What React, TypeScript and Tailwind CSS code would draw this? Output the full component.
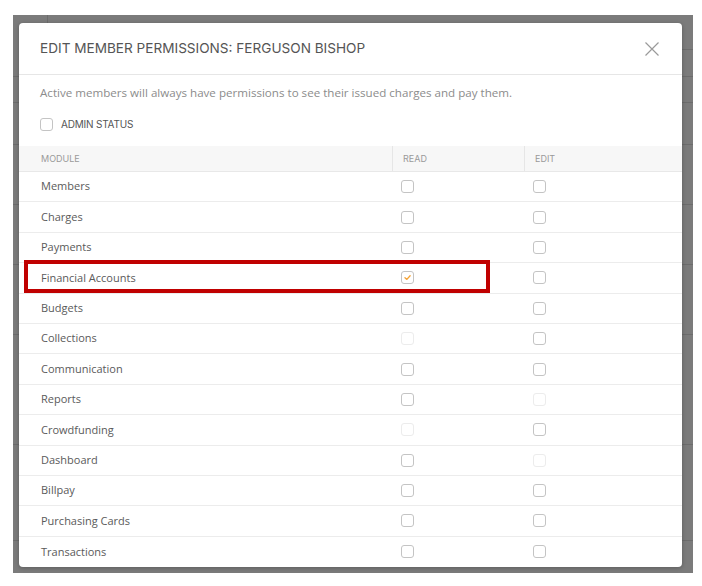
import React from 'react';
import clsx from 'clsx';

type Perm = 'off' | 'on' | 'disabled';

const modules: { name: string; read: Perm; edit: Perm }[] = [
  { name: 'Members', read: 'off', edit: 'off' },
  { name: 'Charges', read: 'off', edit: 'off' },
  { name: 'Payments', read: 'off', edit: 'off' },
  { name: 'Financial Accounts', read: 'on', edit: 'off' },
  { name: 'Budgets', read: 'off', edit: 'off' },
  { name: 'Collections', read: 'disabled', edit: 'off' },
  { name: 'Communication', read: 'off', edit: 'off' },
  { name: 'Reports', read: 'off', edit: 'disabled' },
  { name: 'Crowdfunding', read: 'disabled', edit: 'off' },
  { name: 'Dashboard', read: 'off', edit: 'disabled' },
  { name: 'Billpay', read: 'off', edit: 'off' },
  { name: 'Purchasing Cards', read: 'off', edit: 'off' },
  { name: 'Transactions', read: 'off', edit: 'off' },
];

// rows of the page behind the dimmed backdrop
const backdropRows = [35, 27, 26, 42, 60, 60, 70, 110, 96];

const heading = "font-['Inter',sans-serif]";
const body = "font-['Open_Sans',sans-serif]";

const Box: React.FC<{ state: Perm }> = ({ state }) => (
  <span
    className={clsx(
      'flex h-[13px] w-[13px] items-center justify-center rounded-[3px] border bg-white',
      state === 'disabled' ? 'border-[#ececec]' : 'border-[#c4c4c4]'
    )}
  >
    {state === 'on' && (
      <svg viewBox="0 0 10 10" className="h-[9px] w-[9px]">
        <path
          d="M2.2 5.3 L4.3 7.1 L7.9 3"
          fill="none"
          stroke="#f4a236"
          strokeWidth="1.5"
          strokeLinecap="round"
          strokeLinejoin="round"
        />
      </svg>
    )}
  </span>
);

const App: React.FC = () => {
  return (
    <div className="h-[586px] w-[702px] overflow-hidden bg-white pl-[13px] pt-[15px]">
      <div className="relative h-[558px] w-[680px] bg-[#7b7b7b]">
        {/* dimmed page */}
        <div className="flex flex-col">
          {backdropRows.map((h, i) => (
            <div
              key={i}
              className={clsx('border-b border-[#6c6c6c]', i === 0 && 'ml-[34px] border-l')}
              style={{ height: h }}
            />
          ))}
        </div>

        {/* Modal */}
        <div className="absolute left-[6px] top-[8px] flex h-[544px] w-[663px] flex-col overflow-hidden rounded-[4px] bg-white shadow-[0_1px_4px_rgba(0,0,0,0.25)]">
          <div className="flex h-[52px] shrink-0 items-center justify-between border-b border-[#e6e6e6] pl-[21px] pr-[23px]">
            <h2 className={clsx(heading, 'text-[13.6px] font-normal text-[#555]')}>
              EDIT MEMBER PERMISSIONS: FERGUSON BISHOP
            </h2>
            <svg viewBox="0 0 14 14" className="h-[14px] w-[14px]">
              <path d="M0.5 0.5 L13.5 13.5 M13.5 0.5 L0.5 13.5" stroke="#9a9a9a" strokeWidth="1.2" />
            </svg>
          </div>

          <div className="px-[21px]">
            <p className={clsx(body, 'mt-[10px] text-[11.6px] leading-[16px] text-[#8c8c8c]')}>
              Active members will always have permissions to see their issued charges and pay them.
            </p>
            <label className="mt-[15px] flex h-[16px] items-center gap-[8px]">
              <Box state="off" />
              <span className={clsx(heading, 'text-[10px] tracking-[-0.2px] text-[#555]')}>ADMIN STATUS</span>
            </label>
          </div>

          <div className="mt-[14px]">
            <div
              className={clsx(
                heading,
                'grid h-[26px] grid-cols-[373px_132px_1fr] items-stretch border-b border-[#e8e8e8] bg-[#f7f7f7] text-[9px] text-[#9a9a9a]'
              )}
            >
              <div className="flex items-center pl-[22px]">MODULE</div>
              <div className="flex items-center border-l border-[#e6e6e6] pl-[10px]">READ</div>
              <div className="flex items-center border-l border-[#e6e6e6] pl-[10px]">EDIT</div>
            </div>
            {modules.map((m, i) => (
              <div
                key={m.name}
                className={clsx(
                  'grid h-[30.4px] grid-cols-[373px_132px_1fr] items-center',
                  i < modules.length - 1 && 'border-b border-[#ececec]'
                )}
              >
                <span className={clsx(body, 'pl-[22px] text-[11px] text-[#5a5a5a]')}>{m.name}</span>
                <div className="pl-[9px]">
                  <Box state={m.read} />
                </div>
                <div className="pl-[9px]">
                  <Box state={m.edit} />
                </div>
              </div>
            ))}
          </div>

          {/* highlight around the Financial Accounts row */}
          <div className="pointer-events-none absolute left-[5px] top-[237px] h-[33px] w-[466px] border-[4px] border-[#c00000]" />
        </div>
      </div>
    </div>
  );
};

export default App;
